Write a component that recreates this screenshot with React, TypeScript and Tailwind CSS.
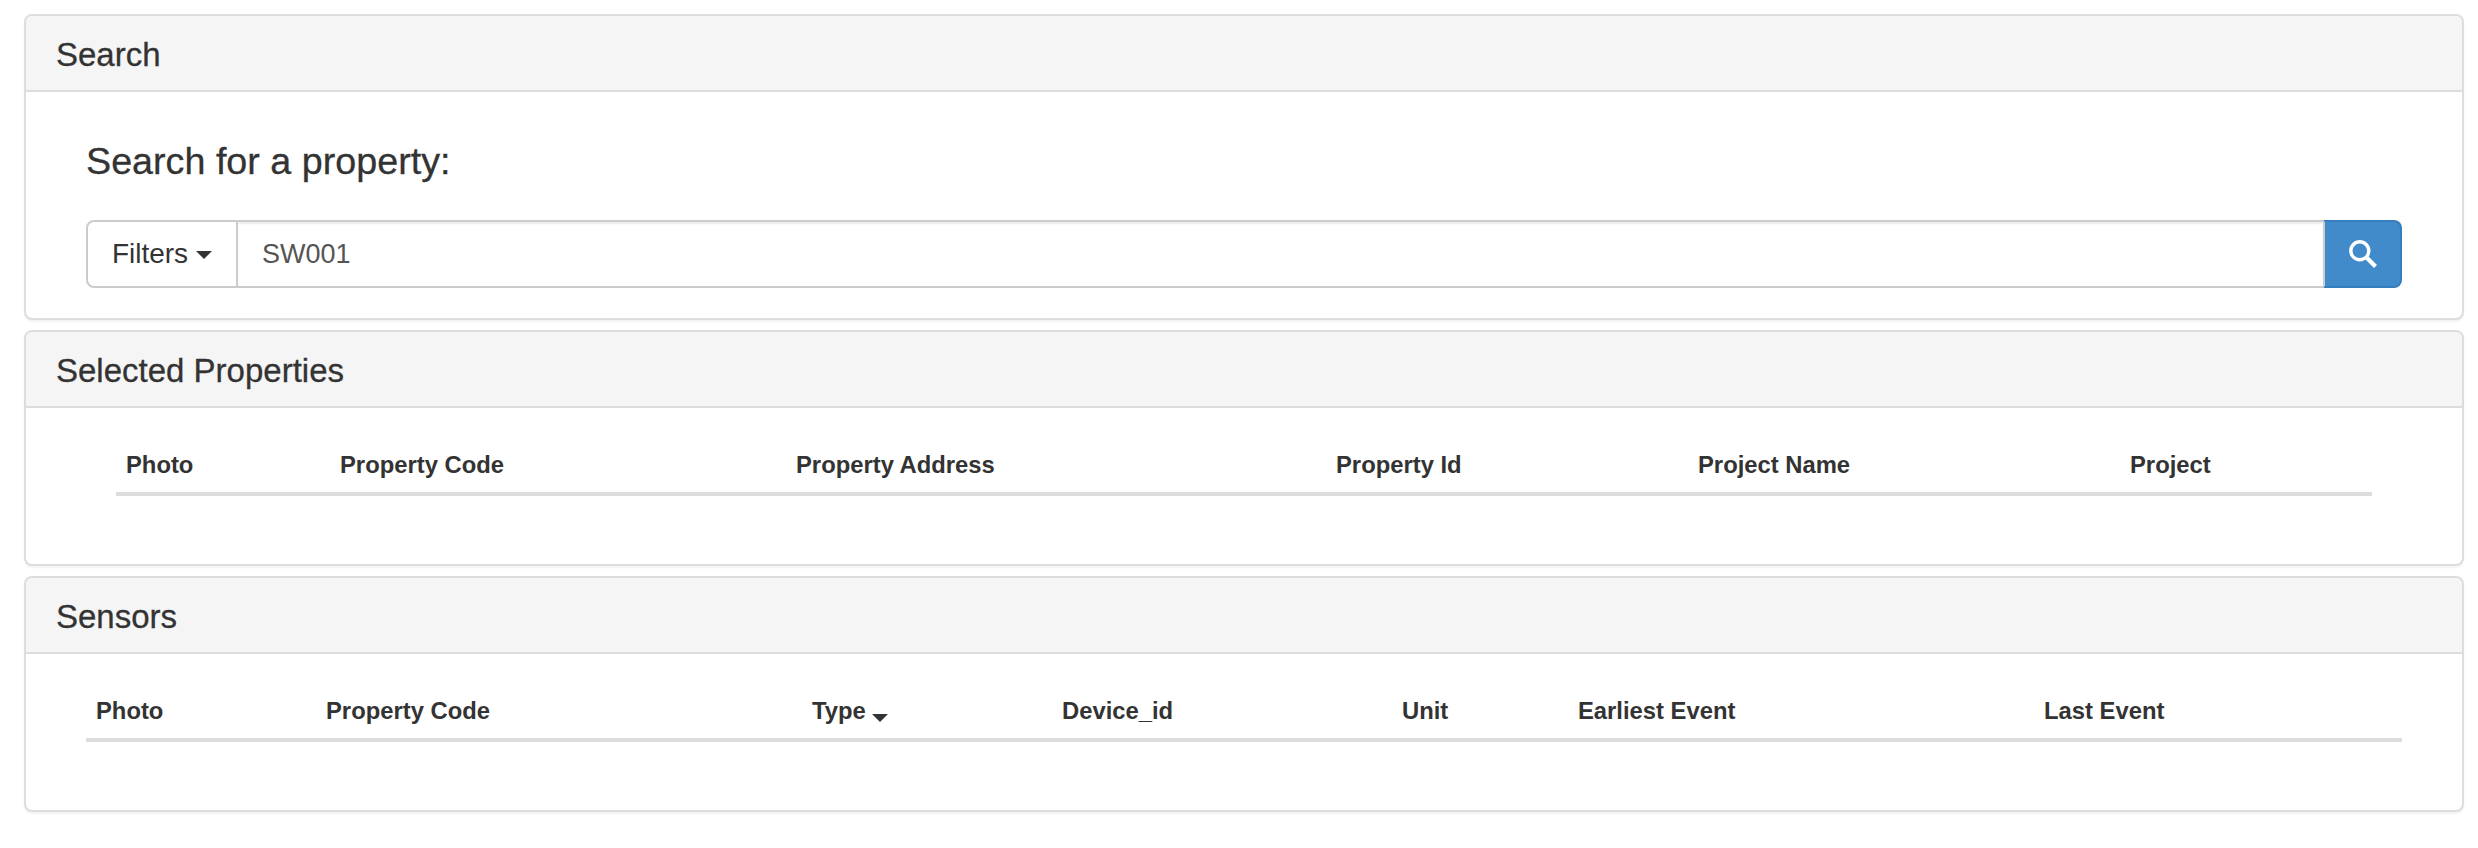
const selectedColumns = ["Photo", "Property Code", "Property Address", "Property Id", "Project Name", "Project"];
const sensorColumns = ["Photo", "Property Code", "Type", "Device_id", "Unit", "Earliest Event", "Last Event"];

function Caret({ className }: { className: string }) {
  return <span className={`inline-block w-0 h-0 border-x-[8px] border-x-transparent border-t-[8px] border-t-[#333] ${className}`} />;
}

function SearchIcon() {
  return (
    <svg width="28" height="28" viewBox="0 0 28 28" fill="none" stroke="#fff">
      <circle cx="10.8" cy="10.8" r="9" strokeWidth="3.4" />
      <path d="M17.5 17.5L26.5 26.5" strokeWidth="4.2" />
    </svg>
  );
}

function Panel({ title, bodyClass, children }: { title: string; bodyClass: string; children: React.ReactNode }) {
  return (
    <section className="rounded-lg border-2 border-[#ddd] bg-white shadow-[0_2px_2px_rgba(0,0,0,0.05)]">
      <div className="h-[76px] rounded-t-md border-b-2 border-[#ddd] bg-[#f5f5f5] pl-[30px] pt-[2px] flex items-center">
        <h3 className="text-[33px] leading-[35px] text-[#333] [-webkit-text-stroke:0.3px_#333]">{title}</h3>
      </div>
      <div className={bodyClass}>{children}</div>
    </section>
  );
}

function TableHead({ columns, gridClass }: { columns: string[]; gridClass: string }) {
  return (
    <div className={`grid h-[64px] border-b-4 border-[#ddd] pt-[6px] items-center text-[23.8px] leading-[34px] font-bold text-[#333] ${gridClass}`}>
      {columns.map((col) => (
        <div key={col} className="pl-[10px] whitespace-nowrap">
          {col}
          {col === "Type" && <Caret className="ml-[6px] align-[-3px]" />}
        </div>
      ))}
    </div>
  );
}

export default function App() {
  return (
    <div className="min-h-[848px] bg-white pt-[14px] pl-[24px] pr-[14px] flex flex-col gap-[10px] font-['Liberation_Sans',Arial,sans-serif]">
      <Panel title="Search" bodyClass="h-[226px] pt-[44px] px-[60px]">
        <h4 className="text-[37.7px] leading-[50px] font-normal text-[#333] h-[84px] [-webkit-text-stroke:0.3px_#333]">Search for a property:</h4>
        <div className="flex h-[68px]">
          <button className="w-[152px] h-full border-2 border-[#ccc] rounded-l-lg bg-white text-[28px] text-[#333] flex items-center justify-center gap-[8px]">
            Filters
            <Caret className="mt-[2px]" />
          </button>
          <input
            readOnly
            value="SW001"
            className="flex-1 min-w-0 h-full border-y-2 border-[#ccc] px-[24px] text-[27px] text-[#555] outline-none shadow-[inset_0_2px_2px_rgba(0,0,0,0.075)]"
          />
          <button className="w-[79px] h-full border-2 border-[#357ebd] border-l-[#ccc] rounded-r-lg bg-[#428bca] flex items-center justify-center">
            <SearchIcon />
          </button>
        </div>
      </Panel>
      <Panel title="Selected Properties" bodyClass="h-[156px] pt-[24px] pl-[90px] pr-[90px]">
        <TableHead columns={selectedColumns} gridClass="grid-cols-[214px_456px_540px_362px_432px_1fr]" />
      </Panel>
      <Panel title="Sensors" bodyClass="h-[156px] pt-[24px] px-[60px]">
        <TableHead columns={sensorColumns} gridClass="grid-cols-[230px_486px_250px_340px_176px_466px_1fr]" />
      </Panel>
    </div>
  );
}
